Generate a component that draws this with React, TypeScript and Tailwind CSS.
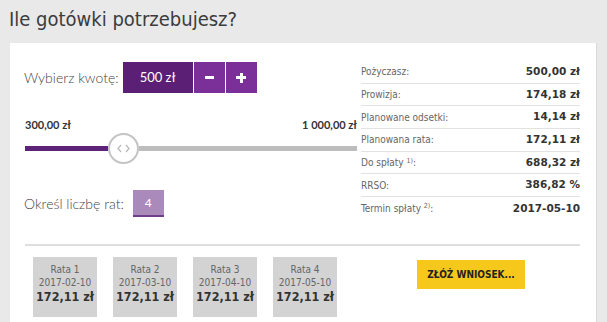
import React from "react";

const rows: { label: React.ReactNode; value: string }[] = [
  { label: "Pożyczasz:", value: "500,00 zł" },
  { label: "Prowizja:", value: "174,18 zł" },
  { label: "Planowane odsetki:", value: "14,14 zł" },
  { label: "Planowana rata:", value: "172,11 zł" },
  {
    label: (
      <>
        Do spłaty <sup className="text-[7px]">1)</sup>:
      </>
    ),
    value: "688,32 zł",
  },
  { label: "RRSO:", value: "386,82 %" },
  {
    label: (
      <>
        Termin spłaty <sup className="text-[7px]">2)</sup>:
      </>
    ),
    value: "2017-05-10",
  },
];

const rates = [
  { n: 1, d: "2017-02-10" },
  { n: 2, d: "2017-03-10" },
  { n: 3, d: "2017-04-10" },
  { n: 4, d: "2017-05-10" },
];

const dv = { fontFamily: '"DejaVu Sans", Verdana, sans-serif' };
const lato = { fontFamily: 'Lato, "Open Sans", sans-serif' };

export default function App() {
  return (
    <div className="w-[607px] h-[322px] bg-[#e9e9e9] overflow-hidden flex flex-col">
      <div
        className="h-[43px] pl-[9px] pt-[6px] text-[20px] leading-[26px] text-[#3c3c3c] font-stretch-condensed"
        style={dv}
      >
        Ile gotówki potrzebujesz?
      </div>
      <div className="ml-[10px] w-[587px] flex-1 bg-white border-r border-[#d8d8d8] pl-[14px] pr-[16px]">
        <div className="flex">
          {/* left column */}
          <div className="w-[333px] flex flex-col">
            <div className="mt-[19px] flex items-center h-[31px]">
              <span className="text-[14px] font-light text-[#444] mr-[4px]" style={lato}>
                Wybierz kwotę:
              </span>
              <div
                className="w-[70px] h-[31px] bg-[#5b1f75] text-white text-[13px] flex items-center justify-center"
                style={lato}
              >
                500 zł
              </div>
              <div className="w-[1px] h-[31px] bg-white" />
              <div className="w-[31px] h-[31px] bg-[#7b2f98] flex items-center justify-center">
                <div className="w-[9px] h-[3px] bg-white" />
              </div>
              <div className="w-[1px] h-[31px] bg-white" />
              <div className="w-[31px] h-[31px] bg-[#7b2f98] flex items-center justify-center relative">
                <div className="w-[10px] h-[3px] bg-white" />
                <div className="absolute w-[3px] h-[10px] bg-white" />
              </div>
            </div>
            <div
              className="mt-[25px] flex justify-between text-[11px] font-bold text-[#333] leading-[14px] pl-[1px]"
              style={lato}
            >
              <span>300,00 zł</span>
              <span>1 000,00 zł</span>
            </div>
            <div className="mt-[1px] h-[31px] flex items-center pl-[1px]">
              <div className="w-[83px] h-[5px] bg-[#5d2379]" />
              <div className="w-[31px] h-[31px] rounded-full border-2 border-[#c4c4c4] bg-white flex items-center justify-center shrink-0 gap-[3px]">
                <svg width="5" height="9" viewBox="0 0 5 9">
                  <path d="M4 1 L1 4.5 L4 8" fill="none" stroke="#b8b8b8" strokeWidth="1.2" />
                </svg>
                <svg width="5" height="9" viewBox="0 0 5 9">
                  <path d="M1 1 L4 4.5 L1 8" fill="none" stroke="#b8b8b8" strokeWidth="1.2" />
                </svg>
              </div>
              <div className="flex-1 h-[5px] bg-[#bdbdbd]" />
            </div>
            <div className="mt-[26px] flex items-center h-[27px]">
              <span className="text-[14px] font-light text-[#444] mr-[9px]" style={lato}>
                Określ liczbę rat:
              </span>
              <div
                className="w-[31px] h-[27px] bg-[#a98abb] border-b-2 border-[#6f3f8a] text-white text-[12px] flex items-center justify-center"
                style={lato}
              >
                4
              </div>
            </div>
          </div>
          {/* right column */}
          <div className="w-[223px] pl-[4px] pt-[18px]" style={dv}>
            {rows.map((r, i) => (
              <div
                key={i}
                className={`h-[22.7px] flex items-center justify-between ${
                  i < rows.length - 1 ? "border-b border-[#e2e2e2]" : ""
                }`}
              >
                <span className="text-[10px] text-[#666] font-stretch-condensed">{r.label}</span>
                <span className="text-[10.5px] font-bold text-[#333]">{r.value}</span>
              </div>
            ))}
          </div>
        </div>
        <div className="mt-[24px] ml-[1px] h-[2px] bg-[#dedede]" />
        <div className="flex items-start mt-[11px] pl-[9px]">
          <div className="flex gap-[16px]">
            {rates.map((r) => (
              <div
                key={r.n}
                className="w-[64px] h-[60px] bg-[#d3d3d3] flex flex-col items-center pt-[6px] text-[#666] font-stretch-condensed"
                style={dv}
              >
                <div className="text-[10px] leading-[13px]">Rata {r.n}</div>
                <div className="text-[10px] leading-[13px]">{r.d}</div>
                <div className="text-[12.5px] leading-[15px] font-bold text-[#333]">172,11 zł</div>
              </div>
            ))}
          </div>
          <div
            className="ml-[80px] mt-[3px] w-[108px] h-[29px] bg-[#f7c81c] flex items-center justify-center text-[10px] font-bold text-[#222] font-stretch-condensed"
            style={dv}
          >
            ZŁÓŻ WNIOSEK...
          </div>
        </div>
      </div>
    </div>
  );
}
